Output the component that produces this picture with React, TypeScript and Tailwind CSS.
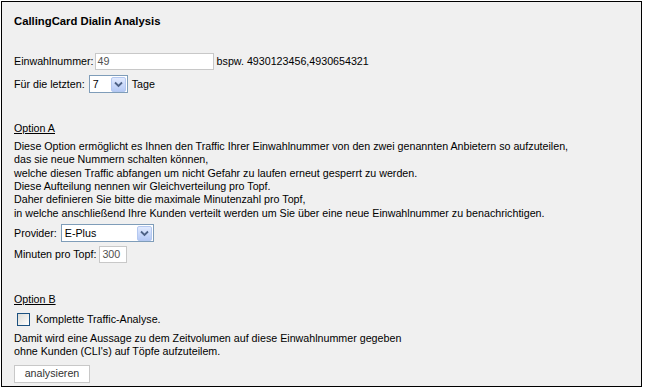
import React from "react";

function Chevron() {
  return (
    <span className="flex h-[15px] w-[15px] items-center justify-center rounded-[2px] border border-[#b4c8f0] bg-gradient-to-b from-[#e1eafe] to-[#b5c9f5]">
      <svg width="9" height="7" viewBox="0 0 9 7">
        <path d="M1 1.5 L4.5 5 L8 1.5" fill="none" stroke="#4d6185" strokeWidth="1.8" />
      </svg>
    </span>
  );
}

function Select({ value, width }: { value: string; width: number }) {
  return (
    <span
      className="inline-flex h-[18px] items-center justify-between border border-[#7f9db9] bg-white pl-[3px] pr-[1px]"
      style={{ width }}
    >
      <span className="text-[#000]">{value}</span>
      <Chevron />
    </span>
  );
}

export default function App() {
  return (
    <div
      className="min-h-[391px] w-[645px] bg-white p-[1px] text-[10.7px] leading-[13.4px] text-black"
      style={{ fontFamily: "'Liberation Sans', Arial, sans-serif" }}
    >
      <div className="h-[386px] w-[641px] border border-black bg-[#f0f0f0] pl-[12px] pt-[13px]">
        <div className="text-[11.3px] font-bold">CallingCard Dialin Analysis</div>

        <div className="mt-[25px] flex items-center">
          <span>Einwahlnummer:</span>
          <span className="ml-[1px] flex h-[17px] w-[119px] items-center border border-[#c8c8c8] bg-white pl-[2px] text-[#505050]">49</span>
          <span className="ml-[3px]">bspw. 4930123456,4930654321</span>
        </div>
        <div className="mt-[5px] flex items-center gap-[4px]">
          <span>Für die letzten:</span>
          <Select value="7" width={39} />
          <span>Tage</span>
        </div>

        <div className="mt-[29px] underline">Option A</div>
        <div className="mt-[4px]">
          <div>Diese Option ermöglicht es Ihnen den Traffic Ihrer Einwahlnummer von den zwei genannten Anbietern so aufzuteilen,</div>
          <div>das sie neue Nummern schalten können,</div>
          <div>welche diesen Traffic abfangen um nicht Gefahr zu laufen erneut gesperrt zu werden.</div>
          <div>Diese Aufteilung nennen wir Gleichverteilung pro Topf.</div>
          <div>Daher definieren Sie bitte die maximale Minutenzahl pro Topf,</div>
          <div>in welche anschließend Ihre Kunden verteilt werden um Sie über eine neue Einwahlnummer zu benachrichtigen.</div>
        </div>
        <div className="mt-[4px] flex items-center gap-[4px]">
          <span>Provider:</span>
          <Select value="E-Plus" width={93} />
        </div>
        <div className="mt-[4px] flex items-center gap-[3px]">
          <span>Minuten pro Topf:</span>
          <span className="flex h-[17px] w-[28px] items-center border border-[#c8c8c8] bg-white pl-[2px] text-[#505050]">300</span>
        </div>

        <div className="mt-[30px] underline">Option B</div>
        <div className="mt-[6px] flex items-center gap-[6px] pl-[3px]">
          <span className="h-[13px] w-[13px] border border-[#1c5180] bg-gradient-to-br from-[#dcdcd7] to-white" />
          <span>Komplette Traffic-Analyse.</span>
        </div>
        <div className="mt-[6px]">
          <div>Damit wird eine Aussage zu dem Zeitvolumen auf diese Einwahlnummer gegeben</div>
          <div>ohne Kunden (CLI's) auf Töpfe aufzuteilem.</div>
        </div>
        <div className="mt-[6px] flex h-[18px] w-[76px] items-center justify-center border border-[#c8c8c8] bg-white text-[#333]">analysieren</div>
      </div>
    </div>
  );
}
